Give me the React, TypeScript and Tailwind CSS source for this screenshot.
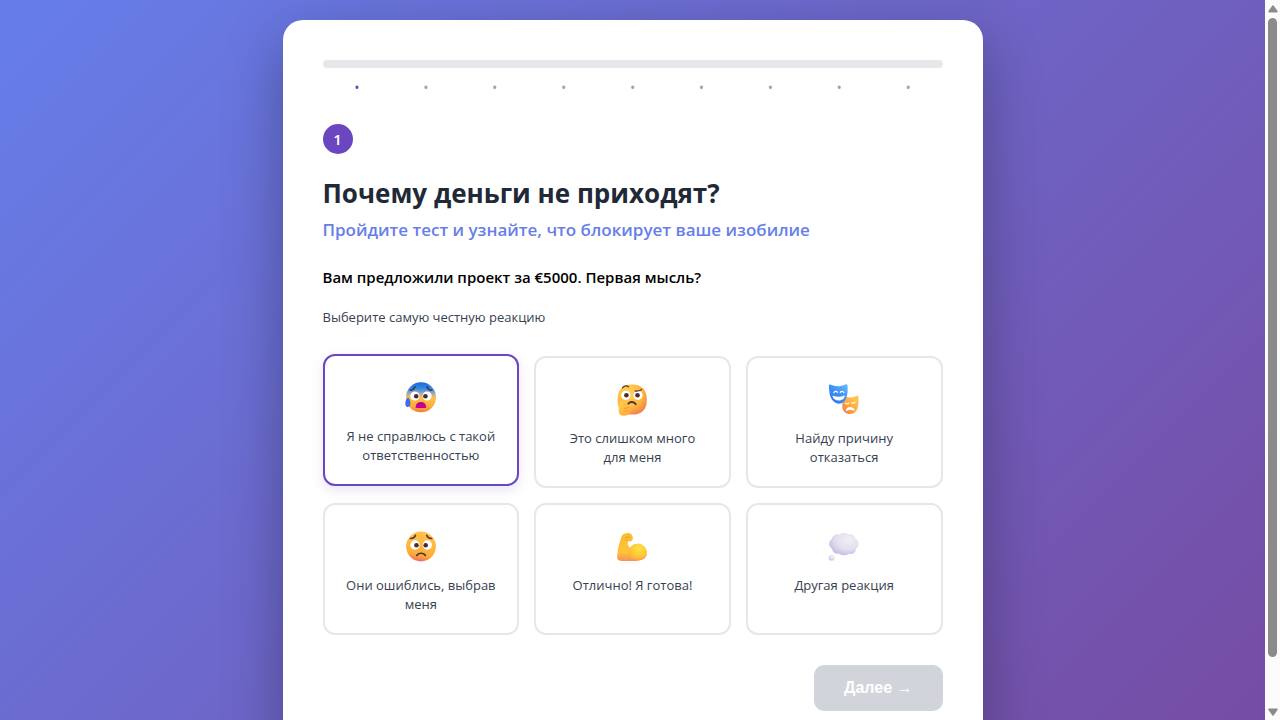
import { useState } from "react";
import type { ReactNode } from "react";

function AnxiousFace() {
  return (
    <svg viewBox="0 0 32 32" className="block size-8" aria-hidden="true">
      <defs>
        <linearGradient id="anx-face" x1="0" y1="0" x2="0" y2="1">
          <stop offset="0" stopColor="#1769d8" />
          <stop offset="0.2" stopColor="#3387e2" />
          <stop offset="0.38" stopColor="#a5a9b5" />
          <stop offset="0.52" stopColor="#ffc145" />
          <stop offset="0.8" stopColor="#ffad38" />
          <stop offset="1" stopColor="#f5784c" />
        </linearGradient>
      </defs>
      <circle cx="16" cy="15.3" r="15" fill="url(#anx-face)" />
      <path d="M3 15.5c1.6 1 2.8 4 2.4 7-.2 1.800-1.300 2.600-2.800 2.500C1 24.800.3 23.500.3 21.500c0-2.600 1.200-5.200 2.700-6z" fill="#3b6cf0" />
      <circle cx="9.900" cy="14" r="4.600" fill="#fff" />
      <circle cx="22.100" cy="14" r="4.600" fill="#fff" />
      <circle cx="11.200" cy="14.300" r="2.300" fill="#4b2a3b" />
      <circle cx="20.400" cy="14.300" r="2.300" fill="#4b2a3b" />
      <path d="M5.200 8.200c2.600-.2 4.100-1.500 4.800-3.500M26.800 8.200c-2.600-.2-4.100-1.500-4.800-3.500" fill="none" stroke="#3c3555" strokeWidth="1.500" strokeLinecap="round" />
      <path d="M10.500 25.500c.3-3.600 2.400-5.400 5.400-5.400s5.100 1.800 5.400 5.400c.1.700-10.900.7-10.800 0z" fill="#c1008e" />
    </svg>
  );
}

function ThinkingFace() {
  return (
    <svg viewBox="0 0 32 32" className="block size-8" aria-hidden="true">
      <defs>
        <radialGradient id="think-face" cx="0.38" cy="0.3" r="0.8">
          <stop offset="0" stopColor="#ffd65a" />
          <stop offset="0.6" stopColor="#fdb63d" />
          <stop offset="1" stopColor="#ee7551" />
        </radialGradient>
        <linearGradient id="think-hand" x1="0" y1="0" x2="0.4" y2="1">
          <stop offset="0" stopColor="#ffd149" />
          <stop offset="1" stopColor="#ffae3b" />
        </linearGradient>
      </defs>
      <path d="M16 .5c10 0 14.800 5.500 14.800 15.200S26 30.600 16 30.600 1.600 25.500 1.600 15.700 6 .5 16 .5z" fill="url(#think-face)" />
      <circle cx="9.800" cy="11.300" r="4.600" fill="#fff" />
      <circle cx="22" cy="11.300" r="4.600" fill="#fff" />
      <circle cx="10.400" cy="11.200" r="2.300" fill="#4b2a3b" />
      <circle cx="21.500" cy="11.200" r="2.300" fill="#4b2a3b" />
      <path d="M6.500 3.800c1.500-2.200 4.200-2.500 6-1M19.200 7c2 .4 4.400-.2 6.400-1.500" fill="none" stroke="#5a3441" strokeWidth="1.300" strokeLinecap="round" />
      <path d="M12.300 19.700c1.700-2.400 5.800-2.300 7.500.5" fill="none" stroke="#51303d" strokeWidth="1.800" strokeLinecap="round" />
      <path d="M5.400 18c1.800-.6 2.500.7 2.300 2.400l-.1 1.600c2.300-.8 5.800-1.500 8.300-1.600 2.400 0 2.700 2.400.5 3l-3 .7c1.900.1 2 2.200.3 2.600.8.600.7 1.800-.3 2.400-.3 1.800-2.600 2.700-6 2.600-3.500 0-4.900-2-4.700-5.600.1-3.200.7-6 1-7.200.200-.6.800-.9 1.700-.9z" fill="url(#think-hand)" />
      <path d="M8 24.500c2-.5 4-.9 5.500-.7M8.500 27.200c1.700-.5 3.600-.7 5-.6" fill="none" stroke="#ee883b" strokeWidth=".7" />
    </svg>
  );
}

function Masks() {
  return (
    <svg viewBox="0 0 32 32" className="block size-8" aria-hidden="true">
      <defs>
        <linearGradient id="mask-blue" x1="1" y1="0" x2="0.2" y2="1">
          <stop offset="0" stopColor="#65bdff" />
          <stop offset="0.6" stopColor="#378bf4" />
          <stop offset="1" stopColor="#3a72e7" />
        </linearGradient>
        <linearGradient id="mask-orange" x1="1" y1="0" x2="0" y2="1">
          <stop offset="0" stopColor="#ffce58" />
          <stop offset="0.5" stopColor="#ffad3d" />
          <stop offset="1" stopColor="#ef7550" />
        </linearGradient>
      </defs>
      <path d="M17.500 12.600c3.300 1.500 7.700.9 11.300-.9.900-.4 1.700.2 1.700 1.200.1 4.600.4 9.900-1.900 13.400-3 4.700-8.800 4.900-12.300 1.500-2.300-2.300-2-5.500-2-9.300z" fill="url(#mask-orange)" />
      <path d="M.9 2.100C.7.900 1.700.2 2.800.8c4.600 2 9.700 1.900 14.600-.4 1.200-.6 2.200.1 2.200 1.300.1 5.800.2 10.300-2.200 14-3.100 4.800-8.200 5.200-12 1.600C1.400 13.500 1.300 8 .9 2.100z" fill="url(#mask-blue)" />
      <path d="M5.800 8.700c.7-1.500 2.700-1.700 3.700-.4M12.300 8.300c.9-1.300 2.800-1.200 3.600.2" fill="none" stroke="#fff" strokeWidth="1.200" strokeLinecap="round" />
      <path d="M5.200 11.700c3.200 1.500 7.500 1.500 10.800-.2.500-.2.800.1.700.7-.7 5.300-10.600 5.900-12.100.2-.1-.6.100-.9.600-.7z" fill="#fff" />
      <path d="M17.500 19c.5 1.200 2.500 1.200 3.200.1M23.700 18.700c1 .9 2.700.6 3.300-.6" fill="none" stroke="#fff" strokeWidth="1.200" strokeLinecap="round" />
      <path d="M17.900 26.200c.5-3.600 6.900-4.500 8.600-.5.200.7-.3 1-.9.700-2-.9-4.600-.7-6.700.4-.6.300-1.100 0-1-.6z" fill="#fff" />
    </svg>
  );
}

function WorriedFace() {
  return (
    <svg viewBox="0 0 32 32" className="block size-8" aria-hidden="true">
      <defs>
        <linearGradient id="worry-face" x1="0.6" y1="0" x2="0.4" y2="1">
          <stop offset="0" stopColor="#ffc34a" />
          <stop offset="0.76" stopColor="#ffae39" />
          <stop offset="0.92" stopColor="#f6854e" />
          <stop offset="1" stopColor="#e65a83" />
        </linearGradient>
      </defs>
      <circle cx="16" cy="15.500" r="14.900" fill="url(#worry-face)" />
      <circle cx="10" cy="14" r="4.700" fill="#fff" />
      <circle cx="22.300" cy="14" r="4.700" fill="#fff" />
      <circle cx="11.500" cy="14.300" r="2.300" fill="#4b2a3b" />
      <circle cx="20.700" cy="14.300" r="2.300" fill="#4b2a3b" />
      <path d="M5.500 7.500c2.500.1 4.300-1.200 5-3.200M26.700 7.500c-2.500.1-4.300-1.200-5-3.200" fill="none" stroke="#5a3441" strokeWidth="1.600" strokeLinecap="round" />
      <path d="M11.800 24.500c1.600-3 7-3 8.600 0" fill="none" stroke="#51303d" strokeWidth="1.600" strokeLinecap="round" />
    </svg>
  );
}

function FlexedArm() {
  return (
    <svg viewBox="0 0 32 32" className="block size-8" aria-hidden="true">
      <defs>
        <linearGradient id="arm-base" x1="0.5" y1="0" x2="0.500" y2="1">
          <stop offset="0" stopColor="#f9bd2e" />
          <stop offset="0.7" stopColor="#ffc338" />
          <stop offset="1" stopColor="#f7905b" />
        </linearGradient>
        <radialGradient id="arm-biceps" cx="0.6" cy="0.3" r="0.75">
          <stop offset="0" stopColor="#ffe143" />
          <stop offset="0.6" stopColor="#ffc934" />
          <stop offset="1" stopColor="#fca943" />
        </radialGradient>
      </defs>
      <path d="M8.500 2.700c2.800-1.200 5.600-.7 7.400 1.200 1.500 1.600 1.200 4.500-.3 6-1.100 1-2.700.7-3.800.2-.3 2.800.3 5.200 2.300 7.100 2.500-4.700 8.400-5.700 12.500-3 3.200 2 4.500 4.900 4.300 8.300-.3 4.700-4.500 7.300-11.100 7.400H5.900C2.300 29.900.9 28.200 1.100 25.300 1.500 18 3.600 11 5.300 6.200 6 4.300 6.900 3.300 8.500 2.700z" fill="url(#arm-base)" />
      <ellipse cx="21.500" cy="20.800" rx="8.900" ry="8" fill="url(#arm-biceps)" />
      <path d="M9.500 6.500c1.700-.9 3.400-.6 4.800.4M11.800 10c-1-.2-1.800-.8-2.200-1.500" fill="none" stroke="#df8e28" strokeWidth=".7" strokeLinecap="round" />
    </svg>
  );
}

function ThoughtCloud() {
  return (
    <svg viewBox="0 0 32 32" className="block size-8" aria-hidden="true">
      <defs>
        <radialGradient id="cloud-fill" cx="0.65" cy="0.3" r="0.75">
          <stop offset="0" stopColor="#f2eef5" />
          <stop offset="0.6" stopColor="#e3deec" />
          <stop offset="1" stopColor="#c4b8e2" />
        </radialGradient>
      </defs>
      <path d="M11.500 3.400c2.500-1.900 6.800-1.800 9-.1 3.600-.7 6.600 1.100 7 4.500 4.100 2.500 4.100 7.500.5 9.900-.2 4.100-3.600 6.100-7.200 5-2.700 2.100-6.500 2-9.300 0-4 .7-6.900-1.400-7.400-4.800C.4 15.700-.1 10.700 3.800 8c.7-3.500 4-5.300 7.700-4.600z" fill="url(#cloud-fill)" />
      <circle cx="3.700" cy="26.700" r="2.900" fill="url(#cloud-fill)" />
    </svg>
  );
}

type Option = { label: string; icon: ReactNode };

const options: Option[] = [
  { label: "Я не справлюсь с такой ответственностью", icon: <AnxiousFace /> },
  { label: "Это слишком много для\u00a0меня", icon: <ThinkingFace /> },
  { label: "Найду причину отказаться", icon: <Masks /> },
  { label: "Они ошиблись, выбрав меня", icon: <WorriedFace /> },
  { label: "Отлично! Я готова!", icon: <FlexedArm /> },
  { label: "Другая реакция", icon: <ThoughtCloud /> },
];

const steps = [1, 2, 3, 4, 5, 6, 7, 8, 9];

function ScrollTrack() {
  return (
    <div className="flex w-[15px] shrink-0 flex-col items-center justify-between bg-[#fcfcfc] py-1" aria-hidden="true">
      <svg viewBox="0 0 10 8" className="mt-px h-2 w-[10px]">
        <path d="M4.200.8Q5-.2 5.800.8L9.500 6Q10 7.500 9 7.500H1Q0 7.500.5 6z" fill="#8b8b8b" />
      </svg>
      <div className="mt-[5px] mb-[51px] w-[9px] grow rounded-full bg-[#8b8b8b]" />
      <svg viewBox="0 0 10 8" className="h-2 w-[10px]">
        <path d="M4.200 7.200Q5 8.200 5.800 7.200L9.500 2Q10 .5 9 .5H1Q0 .5.5 2z" fill="#8b8b8b" />
      </svg>
    </div>
  );
}

export default function App() {
  const [active, setActive] = useState(0);

  return (
    <div className="flex h-screen font-['Open_Sans','Noto_Sans',sans-serif]">
      <div className="min-w-0 grow overflow-y-auto [scrollbar-width:none]">
        <div className="min-h-full bg-[linear-gradient(135deg,#667eea_0%,#764ba2_100%)] p-5">
          <main className="mx-auto max-w-[700px] rounded-[20px] bg-white p-10 shadow-[0_20px_60px_rgba(0,0,0,0.3)]">
            <div
              role="progressbar"
              aria-label="Прогресс теста"
              aria-valuemin={0}
              aria-valuemax={9}
              aria-valuenow={0}
              className="h-2 rounded-full bg-[#e5e7eb]"
            />
            <ol className="mt-3 flex text-center text-sm leading-4 text-[#9ca3af]">
              {steps.map((step) => (
                <li key={step} className={step === 1 ? "flex-1 text-[#6b46c1]" : "flex-1"}>
                  •
                </li>
              ))}
            </ol>

            <div className="mt-7 flex size-[30px] items-center justify-center rounded-full bg-[#6b46c1] text-[15px] font-semibold text-white">
              1
            </div>
            <h1 className="mt-5 text-[26px] leading-[38px] font-bold text-[#1f2937]">Почему деньги не приходят?</h1>
            <p className="mt-1 text-[17px] leading-7 font-semibold text-[#667eea]">
              Пройдите тест и узнайте, что блокирует ваше изобилие
            </p>
            <h2 className="mt-[21px] text-[15px] leading-6 font-semibold text-black">
              Вам предложили проект за €5000. Первая мысль?
            </h2>
            <p className="mt-[18px] text-[13px] leading-5 text-[#374151]">Выберите самую честную реакцию</p>

            <div className="mt-[29px] grid grid-cols-3 gap-[15px]">
              {options.map((option, index) => (
                <button
                  key={option.label}
                  type="button"
                  aria-pressed={index === active}
                  onClick={() => setActive(index)}
                  className={
                    index === active
                      ? "flex -translate-y-0.5 cursor-pointer flex-col items-center rounded-xl border-2 border-[#6b46c1] bg-white px-5 pt-[26px] pb-[19px] shadow-[0_4px_12px_rgba(107,70,193,0.15)]"
                      : "flex cursor-pointer flex-col items-center rounded-xl border-2 border-[#e5e7eb] bg-white px-5 pt-[26px] pb-[19px]"
                  }
                >
                  {option.icon}
                  <span className="mt-[13px] text-[13px] leading-[19px] text-[#374151]">{option.label}</span>
                </button>
              ))}
            </div>

            <div className="mt-[30px] flex justify-end">
              <button
                type="button"
                disabled
                className="rounded-[10px] bg-[#d1d5db] px-[30px] py-[11px] font-['Liberation_Sans',Arial,sans-serif] text-base leading-6 font-bold text-white"
              >
                Далее <span className="font-normal">→</span>
              </button>
            </div>
          </main>
        </div>
      </div>
      <ScrollTrack />
    </div>
  );
}
